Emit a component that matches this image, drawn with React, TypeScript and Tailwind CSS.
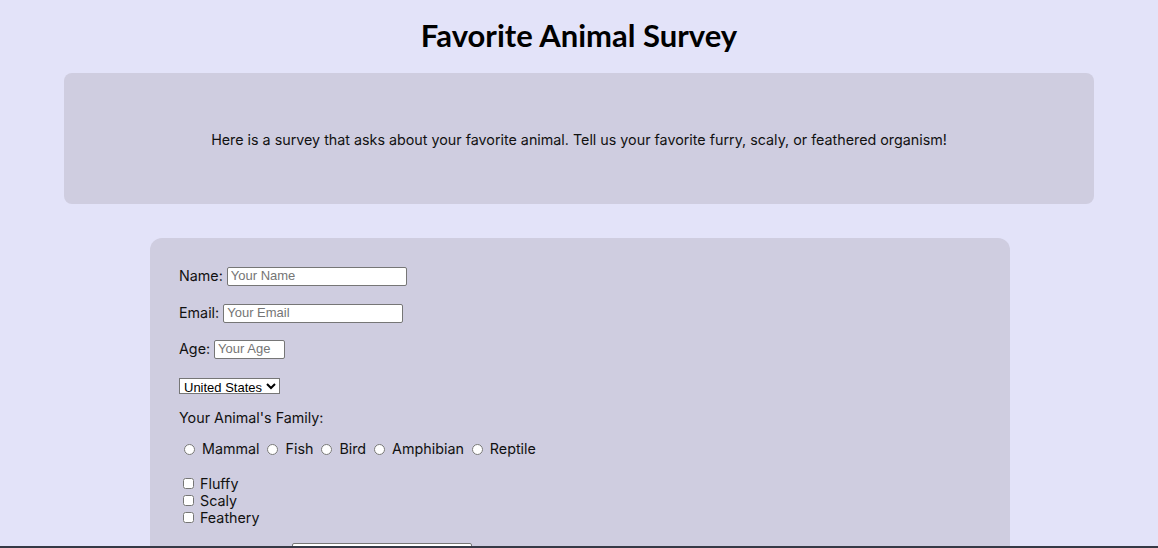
import React from "react";

const families = ["Mammal", "Fish", "Bird", "Amphibian", "Reptile"];
const traits = ["Fluffy", "Scaly", "Feathery"];

const inputCls =
  "h-[19px] border border-[#767676] bg-white px-[3px] text-[13px] text-black placeholder:text-[#757575] font-['Liberation_Sans',Arial,sans-serif] rounded-[2px]";

export default function App() {
  return (
    <div className="min-h-[548px] bg-[#e3e3f9] text-[14.3px] text-[#111] font-['Inter',sans-serif]">
      <h1 className="pt-[17px] text-center text-[31px] font-bold leading-[36px] text-black font-['Lato',sans-serif]">
        Favorite Animal Survey
      </h1>

      {/* Intro */}
      <div className="mx-[64px] mt-[20px] flex h-[131px] items-center justify-center rounded-lg bg-[#cfcde0] pt-[3px]">
        <p>
          Here is a survey that asks about your favorite animal. Tell us your favorite furry, scaly, or feathered
          organism!
        </p>
      </div>

      {/* Form */}
      <form className="ml-[150px] mt-[34px] w-[860px] rounded-xl bg-[#cfcde0] px-[29px] pt-[28px] pb-10">
        <div className="flex items-center gap-[4px] h-[20px]">
          <label>Name:</label>
          <input className={`${inputCls} w-[180px]`} placeholder="Your Name" />
        </div>
        <div className="mt-[17px] flex items-center gap-[4px] h-[20px]">
          <label>Email:</label>
          <input className={`${inputCls} w-[180px]`} placeholder="Your Email" />
        </div>
        <div className="mt-[16px] flex items-center gap-[4px] h-[20px]">
          <label>Age:</label>
          <input className={`${inputCls} w-[71px]`} placeholder="Your Age" />
        </div>
        <div className="mt-[17px] h-[16px]">
          <select className="h-[16px] w-[101px] border border-[#767676] bg-white text-[13px] leading-[14px] text-black font-['Liberation_Sans',Arial,sans-serif]">
            <option>United States</option>
            <option>Canada</option>
            <option>Mexico</option>
          </select>
        </div>
        <p className="mt-[16px] leading-[20px]">Your Animal's Family:</p>
        <div className="mt-[11px] flex items-center h-[20px]">
          {families.map((f) => (
            <label key={f} className="mr-[3px] flex items-center">
              <input type="radio" name="family" className="ml-[5px] mr-[7px] h-[11px] w-[11px]" />
              {f}
            </label>
          ))}
        </div>
        <div className="mt-[16px] flex flex-col">
          {traits.map((t) => (
            <label key={t} className="flex h-[17px] items-center">
              <input type="checkbox" className="ml-[4px] mr-[6px] h-[11px] w-[11px]" />
              {t}
            </label>
          ))}
        </div>
        <div className="mt-[16px] flex items-center gap-[4px] h-[20px]">
          <label className="w-[109px] whitespace-nowrap">Favorite Animal:</label>
          <input className={`${inputCls} w-[180px]`} placeholder="Your Favorite Animal" />
        </div>
      </form>

      <div className="fixed bottom-0 left-0 right-0 h-[2px] bg-[#363946]" />
    </div>
  );
}
